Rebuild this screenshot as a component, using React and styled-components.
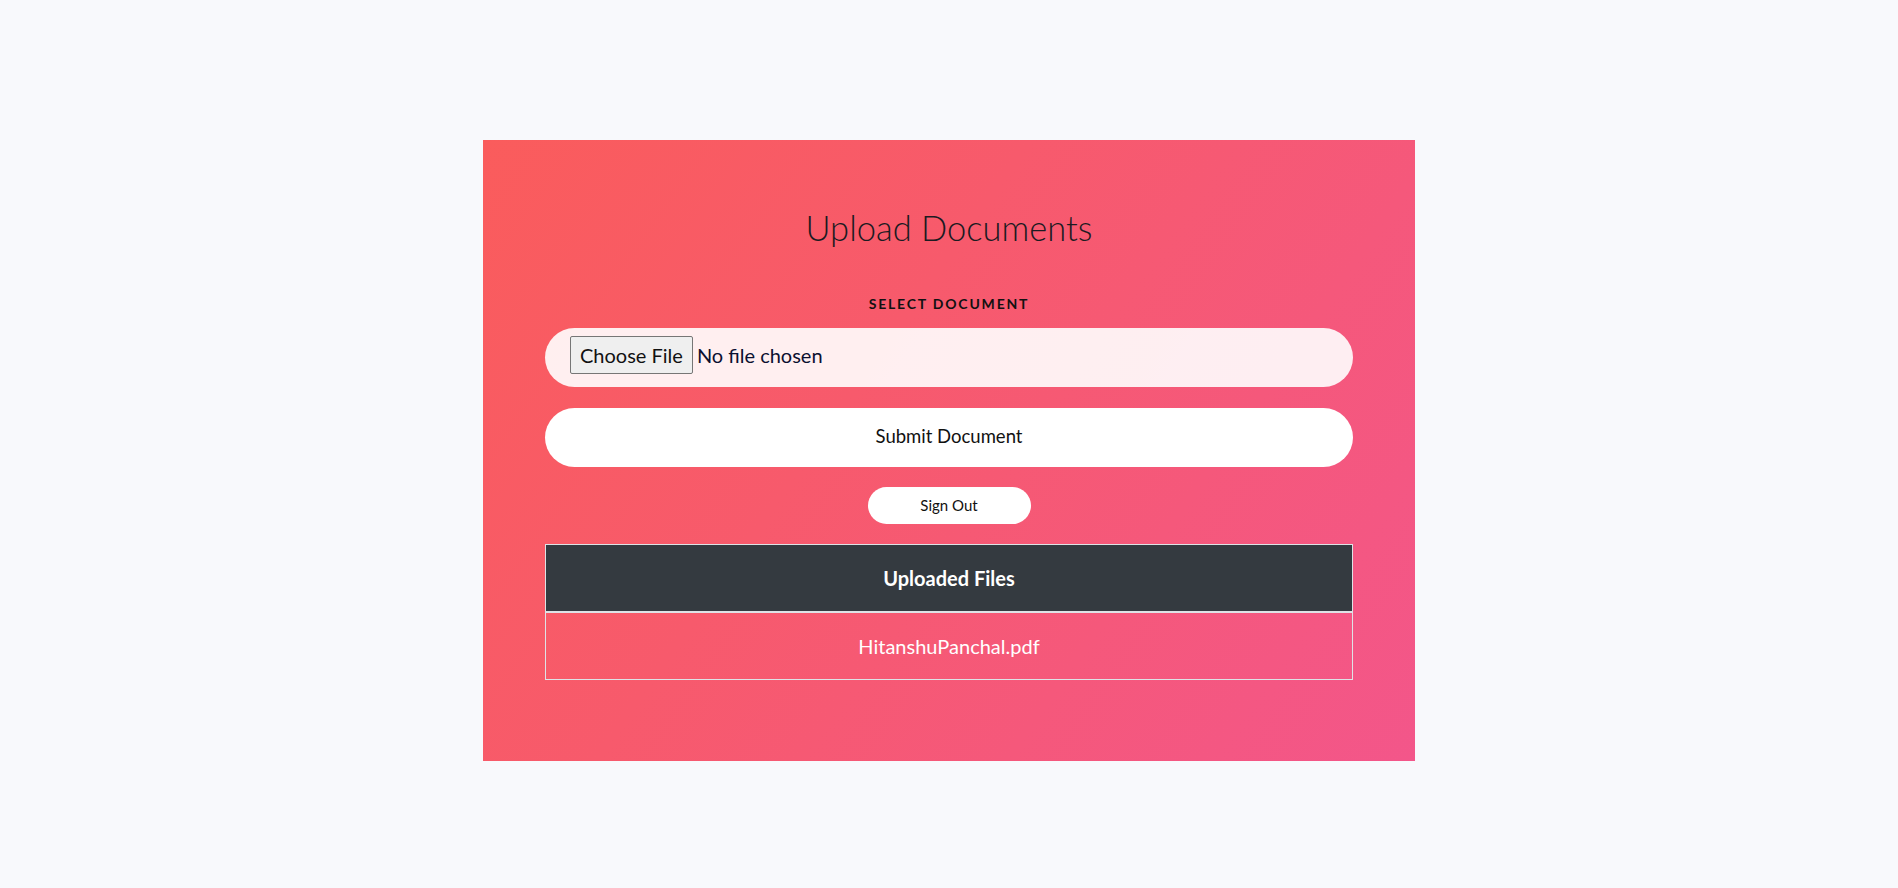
import React from "react";
import styled, { createGlobalStyle } from "styled-components";

const GlobalStyle = createGlobalStyle`
  body {
    margin: 0;
    background: #f8f9fc;
    font-family: Lato, "Open Sans", sans-serif;
    color: #212529;
  }
`

const Page = styled.div`
  width: 100%;
  min-height: 888px;
  padding-top: 140px;
  box-sizing: border-box;
`

const Card = styled.div`
  width: 932px;
  margin: 0 auto;
  box-sizing: border-box;
  padding: 67px 62px 81px 62px;
  background: linear-gradient(125deg, #fa5c5c 0%, #f75a6c 40%, #f3568a 100%);
  display: flex;
  flex-direction: column;
  align-items: center;
`

const Title = styled.h1`
  margin: 0;
  font-size: 34.5px;
  font-weight: 300;
  line-height: 1.2;
  color: #1b1b22;
`

const Label = styled.label`
  margin: 48px 0 15px 0;
  font-size: 14px;
  font-weight: 700;
  line-height: 1.2;
  letter-spacing: 1.8px;
  text-transform: uppercase;
  color: #111;
`

const FileInput = styled.input`
  width: 100%;
  height: 59px;
  box-sizing: border-box;
  padding: 8px 25px 13px 25px;
  border: none;
  border-radius: 30px;
  background: rgba(255, 255, 255, 0.9);
  font-family: Lato, sans-serif;
  font-size: 20px;
  color: #0b1030;
  outline: none;

  &::file-selector-button {
    font-family: Lato, sans-serif;
    font-size: 20px;
    height: 38px;
    padding: 0 9px;
    margin-right: 4px;
    border: 1px solid #767676;
    border-radius: 2px;
    background: #efefef;
    color: #111;
  }
`

const SubmitButton = styled.button`
  width: 100%;
  height: 59px;
  margin-top: 21px;
  padding: 0 0 3px 0;
  border: none;
  border-radius: 30px;
  background: #fff;
  font-family: Lato, sans-serif;
  font-size: 18.5px;
  color: #111;
  cursor: pointer;
`

const SignOut = styled.button`
  width: 163px;
  height: 37px;
  margin: 20px 0;
  padding: 0 0 1px 0;
  border: none;
  border-radius: 19px;
  background: #fff;
  font-family: Lato, sans-serif;
  font-size: 15px;
  color: #111;
  cursor: pointer;
`

const Table = styled.table`
  width: 100%;
  border-collapse: collapse;
  text-align: center;
  font-size: 20px;
  line-height: 30px;
`

const HeadCell = styled.th`
  padding: 18px;
  background: #343a40;
  color: #fff;
  font-weight: 700;
  border: 1px solid #dee2e6;
  border-bottom-width: 2px;
`

const Cell = styled.td`
  padding: 18px;
  color: #fff;
  border: 1px solid #dee2e6;
  border-top: none;
`

const App = () => {
  const files = ['HitanshuPanchal.pdf']

  return (
    <>
      <GlobalStyle />
      <Page>
        <Card>
          <Title>Upload Documents</Title>
          <Label htmlFor="doc">Select Document</Label>
          <FileInput id="doc" type="file" />
          <SubmitButton>Submit Document</SubmitButton>
          <SignOut>Sign Out</SignOut>
          <Table>
            <thead>
              <tr>
                <HeadCell>Uploaded Files</HeadCell>
              </tr>
            </thead>
            <tbody>
              {files.map(f => (
                <tr key={f}>
                  <Cell>{f}</Cell>
                </tr>
              ))}
            </tbody>
          </Table>
        </Card>
      </Page>
    </>
  )
}

export default App;
